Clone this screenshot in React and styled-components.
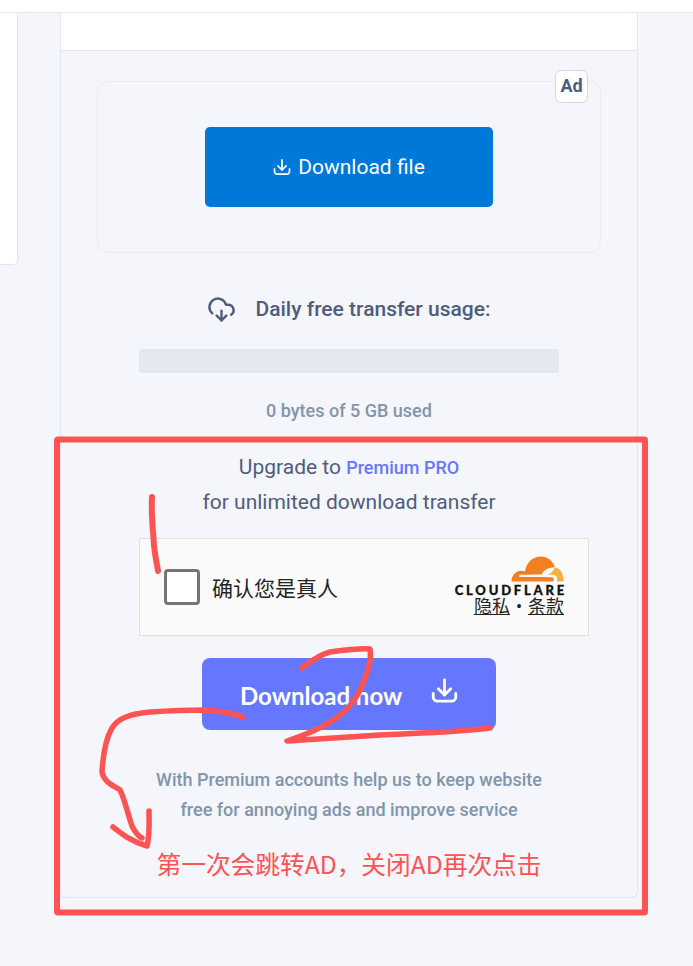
import React from "react";
import styled, { createGlobalStyle } from "styled-components";
import { CloudDownload } from "lucide-react";

const GlobalStyle = createGlobalStyle`
  html, body {
    margin: 0;
    padding: 0;
    background: #f4f6fb;
  }
  * {
    box-sizing: border-box;
  }
`;

const DownloadIcon = ({ size, strokeWidth, className }) => (
  <svg
    className={className}
    width={size}
    height={size}
    viewBox="0 0 24 24"
    fill="none"
    stroke="currentColor"
    strokeWidth={strokeWidth}
    strokeLinecap="round"
    strokeLinejoin="round"
  >
    <path d="M12 2.5v13.5" />
    <path d="M6.5 10.5l5.5 5.5 5.5-5.5" />
    <path d="M2 14.5v3.5a3.5 3.5 0 0 0 3.5 3.5h13a3.5 3.5 0 0 0 3.5-3.5v-3.5" />
  </svg>
);

const CloudflareCloud = () => (
  <svg width="53" height="26" viewBox="0 0 53 26">
    <path
      fill="#f38020"
      d="M0.5 25.5C0.5 20 4.5 15 10 14.8C11.5 14.7 12.8 15 14 15.6C15 7 21.5 0.5 29.5 0.5C36.5 0.5 42 5 43.8 11.2C38 11.3 33 13.6 30.8 18.5C24 18.6 14 18.7 9 18.8C7.5 19 7.5 20.8 9 21C20 21 33 21 41 21.2C43.5 21.5 43.5 25.5 41 25.5Z"
    />
    <path
      fill="#faae40"
      d="M43.8 11.6C48.8 11.6 52.6 17 52.6 25.5H45.6C47 23 46 19.3 42.5 18.8L37 18.4C40 17.5 42.5 15.5 43.8 11.6Z"
    />
  </svg>
);

const Annotations = () => (
  <Overlay viewBox="0 0 693 966" fill="none" stroke="#ff5252" strokeLinecap="round" strokeLinejoin="round">
    <rect x="57" y="439.5" width="588" height="473" rx="1" strokeWidth="6" />
    <path strokeWidth="6" d="M152 497C151 515 153 530 154 545C155 556 157 564 158 571" />
    <path
      strokeWidth="5.5"
      d="M302 668C310 662 318 655 330 652C345 650 360 648 370 649C372 660 366 678 358 694C348 712 330 727 287 741C320 739 350 737 380 735C420 733 460 732 490 728"
    />
    <path
      strokeWidth="5.5"
      d="M243 717C232 713 220 711 205 710C185 710 165 711 150 712C130 714 118 718 112 728C105 740 103 755 102 772C104 782 112 785 120 790C125 800 128 815 132 826C135 832 138 836 142 838"
    />
    <path strokeWidth="5.5" d="M113 827C122 834 132 842 147 846C150 835 149 822 149 811" />
  </Overlay>
);

export default function App() {
  return (
    <Page>
      <GlobalStyle />
      <TopBar />
      <Columns>
        <SidePanel />
        <Card>
          <CardHeader />
          <CardBody>
            <AdBox>
              <AdBadge>Ad</AdBadge>
              <FileButton>
                <DownloadIcon size={18} strokeWidth={2.3} />
                Download file
              </FileButton>
            </AdBox>
            <UsageTitle>
              <CloudDownload size={29} strokeWidth={2} />
              <span>Daily free transfer usage:</span>
            </UsageTitle>
            <UsageBar />
            <MutedText>0 bytes of 5 GB used</MutedText>
            <UpgradeText>
              <div>
                Upgrade to <PremiumLink>Premium PRO</PremiumLink>
              </div>
              <div>for unlimited download transfer</div>
            </UpgradeText>
            <Captcha>
              <CaptchaLeft>
                <CaptchaBox />
                <CaptchaLabel>确认您是真人</CaptchaLabel>
              </CaptchaLeft>
              <CaptchaBrand>
                <CloudflareCloud />
                <Wordmark>CLOUDFLARE</Wordmark>
                <CaptchaLinks>
                  <u>隐私</u>
                  <LinkDot>•</LinkDot>
                  <u>条款</u>
                </CaptchaLinks>
              </CaptchaBrand>
            </Captcha>
            <NowButton>
              <NowLabel>Download now</NowLabel>
              <NowIcon size={27} strokeWidth={2.5} />
            </NowButton>
            <NoteText>
              With Premium accounts help us to keep website
              <br />
              free for annoying ads and improve service
            </NoteText>
            <RedNote>第一次会跳转AD，关闭AD再次点击</RedNote>
          </CardBody>
        </Card>
      </Columns>
      <Annotations />
    </Page>
  );
}

const Page = styled.div`
  position: relative;
  width: 693px;
  height: 966px;
  overflow: hidden;
  background: #f4f6fb;
  font-family: Roboto, "Noto Sans CJK SC", sans-serif;
`;

const Overlay = styled.svg`
  position: absolute;
  top: 0;
  left: 0;
  width: 693px;
  height: 966px;
  pointer-events: none;
`;

const TopBar = styled.div`
  height: 13px;
  background: #fff;
  border-bottom: 1px solid #e2e6ef;
`;

const Columns = styled.div`
  display: flex;
  align-items: flex-start;
  gap: 42px;
`;

const SidePanel = styled.div`
  width: 18px;
  height: 252px;
  background: #fff;
  border: 1px solid #e2e6ef;
  border-width: 0 1px 1px 0;
  border-bottom-right-radius: 5px;
`;

const Card = styled.div`
  width: 578px;
  height: 885px;
  border: 1px solid #e2e6ef;
  border-top: 0;
  border-radius: 0 0 6px 6px;
`;

const CardHeader = styled.div`
  height: 38px;
  background: #fff;
  border-bottom: 1px solid #e2e6ef;
`;

const CardBody = styled.div`
  display: flex;
  flex-direction: column;
  align-items: center;
  padding-top: 30px;
  text-align: center;
`;

const AdBox = styled.div`
  position: relative;
  display: flex;
  align-items: center;
  justify-content: center;
  width: 504px;
  height: 172px;
  border: 1px solid #e9ecf3;
  border-radius: 12px;
`;

const AdBadge = styled.div`
  position: absolute;
  top: -12px;
  right: 12px;
  width: 33px;
  height: 33px;
  background: #fff;
  border: 1px solid #d5d8df;
  border-radius: 6px;
  color: #4f5d7d;
  font-size: 18px;
  font-weight: 700;
  line-height: 30px;
`;

const FileButton = styled.div`
  display: flex;
  align-items: center;
  justify-content: center;
  gap: 7px;
  width: 288px;
  height: 80px;
  background: #0078d8;
  border-radius: 5px;
  color: #fff;
  font-size: 21px;
`;

const UsageTitle = styled.div`
  display: flex;
  align-items: center;
  justify-content: center;
  gap: 19px;
  height: 28px;
  margin-top: 42px;
  color: #4f5d7d;
  font-size: 21px;
  font-weight: 500;
`;

const UsageBar = styled.div`
  width: 420px;
  height: 24px;
  margin-top: 26px;
  background: #e4e8f1;
  border-radius: 3px;
`;

const MutedText = styled.div`
  margin-top: 26px;
  color: #8195ac;
  font-size: 18px;
  font-weight: 500;
  line-height: 24px;
`;

const UpgradeText = styled.div`
  margin-top: 27px;
  color: #4f5d7d;
  font-size: 21px;
  line-height: 34px;
`;

const PremiumLink = styled.span`
  color: #6577fe;
  font-size: 18px;
  font-weight: 500;
`;

const Captcha = styled.div`
  display: flex;
  align-items: center;
  justify-content: space-between;
  width: 450px;
  height: 98px;
  margin: 19px 0 0 30px;
  padding: 0 24px;
  background: #fafafa;
  border: 1px solid #e0e0e0;
`;

const CaptchaLeft = styled.div`
  display: flex;
  align-items: center;
  gap: 12px;
`;

const CaptchaBox = styled.div`
  width: 36px;
  height: 36px;
  background: #fff;
  border: 3px solid #757575;
  border-radius: 4px;
`;

const CaptchaLabel = styled.span`
  color: #232323;
  font-size: 21px;
  font-family: "Noto Sans CJK SC", sans-serif;
`;

const CaptchaBrand = styled.div`
  display: flex;
  flex-direction: column;
  align-items: flex-end;
  margin-top: 0;
`;

const Wordmark = styled.div`
  margin: 2px -3px 0 0;
  color: #111;
  font-family: Lato, sans-serif;
  font-size: 13px;
  font-weight: 900;
  letter-spacing: 2.8px;
  line-height: 12px;
  -webkit-text-stroke: 0.3px #111;
`;

const CaptchaLinks = styled.div`
  color: #232323;
  font-size: 18px;
  line-height: 22px;
  font-family: Roboto, "Noto Sans CJK SC", sans-serif;
`;

const LinkDot = styled.span`
  margin: 0 6px;
`;

const NowButton = styled.div`
  display: flex;
  align-items: center;
  justify-content: space-between;
  width: 294px;
  height: 72px;
  margin-top: 22px;
  padding: 0 38px;
  background: #6577fe;
  border-radius: 8px;
  color: #fff;
  font-family: Lato, sans-serif;
  font-size: 24px;
  font-weight: 700;
`;

const NowLabel = styled.span`
  margin-top: 2px;
`;

const NowIcon = styled(DownloadIcon)`
  margin: -7px 0 0 0;
`;

const NoteText = styled.div`
  margin-top: 35px;
  color: #8195ac;
  font-size: 18px;
  font-weight: 500;
  line-height: 30px;
`;

const RedNote = styled.div`
  margin-top: 21px;
  color: #ff5252;
  font-family: "Noto Sans CJK SC", sans-serif;
  font-size: 24.7px;
  line-height: 34px;
`;
